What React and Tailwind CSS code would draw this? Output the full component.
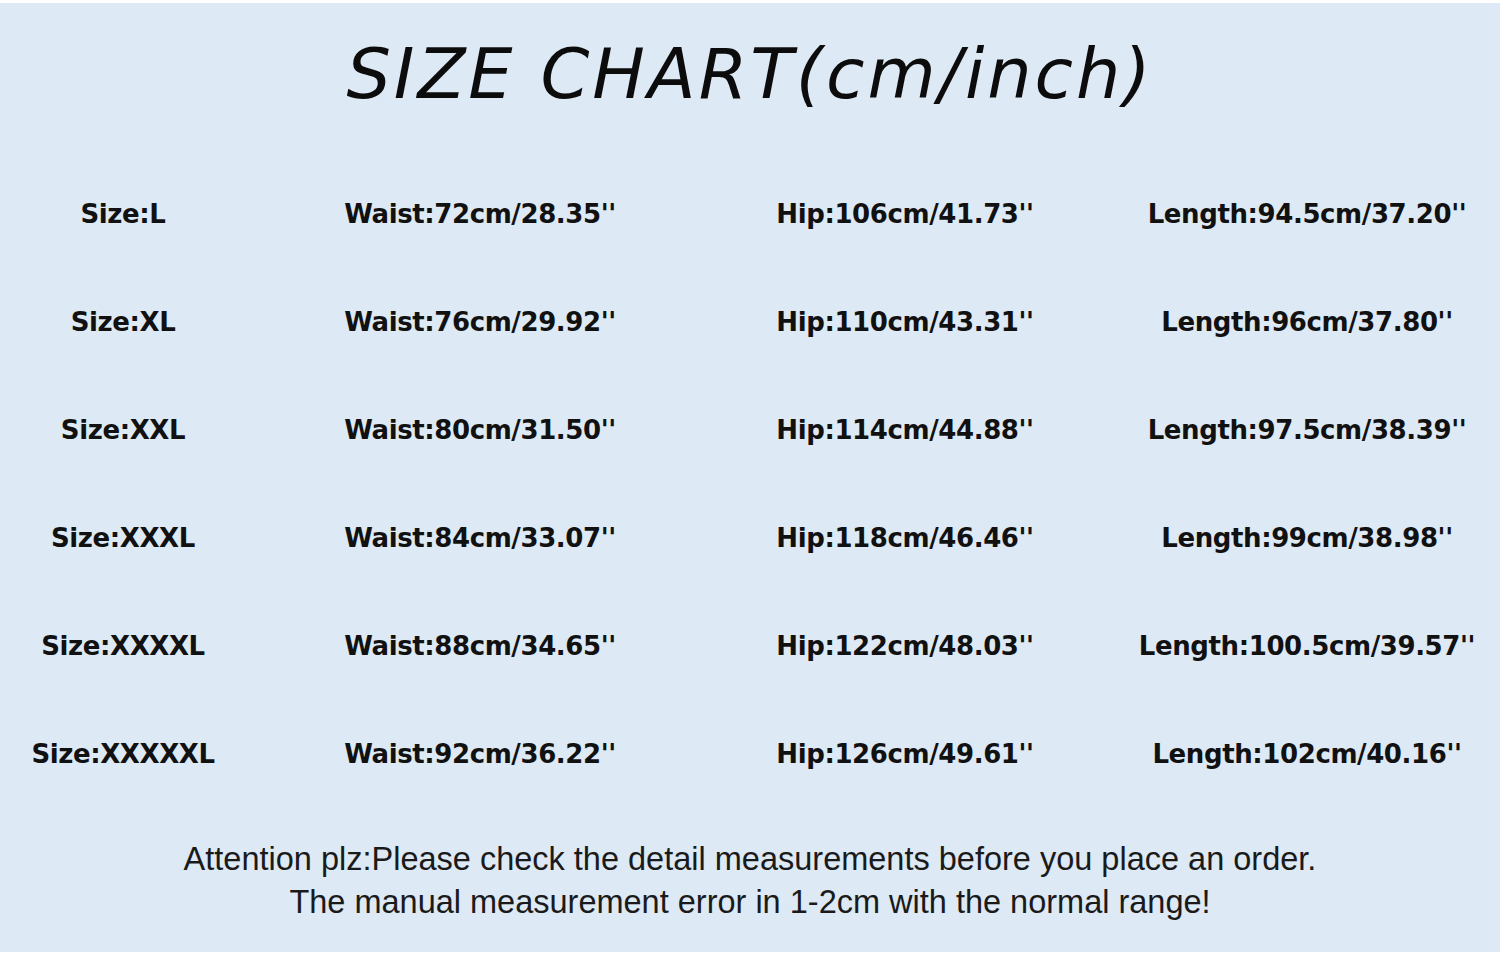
import React from 'react';

const rows = [
  ['Size:L', "Waist:72cm/28.35''", "Hip:106cm/41.73''", "Length:94.5cm/37.20''"],
  ['Size:XL', "Waist:76cm/29.92''", "Hip:110cm/43.31''", "Length:96cm/37.80''"],
  ['Size:XXL', "Waist:80cm/31.50''", "Hip:114cm/44.88''", "Length:97.5cm/38.39''"],
  ['Size:XXXL', "Waist:84cm/33.07''", "Hip:118cm/46.46''", "Length:99cm/38.98''"],
  ['Size:XXXXL', "Waist:88cm/34.65''", "Hip:122cm/48.03''", "Length:100.5cm/39.57''"],
  ['Size:XXXXXL', "Waist:92cm/36.22''", "Hip:126cm/49.61''", "Length:102cm/40.16''"],
];

export default function App() {
  return (
    <div className="w-[1500px] h-[956px] bg-white pt-[3px] pb-[4px]">
      <div className="h-full bg-[#dde9f4] flex flex-col">
        <div className="h-[157px] flex items-start justify-center pt-[23px]">
          <h1 className="text-[70px] leading-[96px] italic font-extralight text-[#0c0c0c] tracking-[2.9px] font-['DejaVu_Sans',sans-serif]">
            SIZE CHART(cm/inch)
          </h1>
        </div>

        <div className="grid grid-cols-[246px_468px_382px_1fr] auto-rows-[108px] text-[#111] font-bold text-[26px] font-['DejaVu_Sans',sans-serif] tracking-[-0.4px]">
          {rows.map((r) => (
            <React.Fragment key={r[0]}>
              <div className="flex items-center justify-center">{r[0]}</div>
              <div className="flex items-center justify-center">{r[1]}</div>
              <div className="flex items-center justify-center">{r[2]}</div>
              <div className="flex items-center justify-center pl-[18px]">{r[3]}</div>
            </React.Fragment>
          ))}
        </div>

        <div className="mt-[30px] flex flex-col items-center text-[#1a1a1a] text-[32.5px] leading-[43px] font-['Liberation_Sans',sans-serif]">
          <p>Attention plz:Please check the detail measurements before you place an order.</p>
          <p>The manual measurement error in 1-2cm with the normal range!</p>
        </div>
      </div>
    </div>
  );
}
